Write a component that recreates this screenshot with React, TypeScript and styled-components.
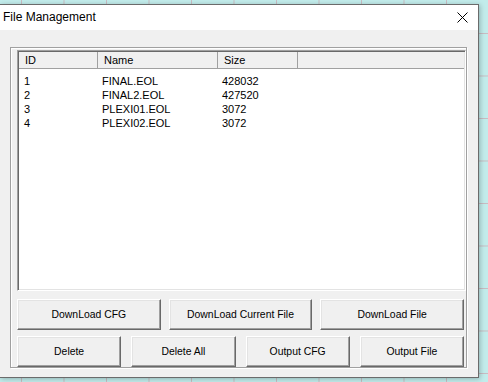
import styled, { createGlobalStyle } from "styled-components";

const GlobalStyle = createGlobalStyle`
  html, body {
    margin: 0;
    padding: 0;
    height: 382px;
    overflow: hidden;
  }
  body {
    background-color: #c2eceb;
    background-image: linear-gradient(to right, #c8bcc2 1px, transparent 1px),
      linear-gradient(to bottom, #c8bcc2 1px, transparent 1px);
    background-size: 42.5px 42.5px;
    background-position: 21px 33px;
    font-family: "Liberation Sans", Arial, sans-serif;
  }
`;

const Desktop = styled.div`
  height: 382px;
  padding-top: 4px;
  box-sizing: border-box;
`;

const Window = styled.div`
  width: 479px;
  height: 374px;
  box-sizing: border-box;
  border: 1px solid #6b6b6b;
  border-left: none;
  display: flex;
  flex-direction: column;
  box-shadow: 1px 1px 5px rgba(0, 0, 0, 0.25);
`;

const TitleBar = styled.div`
  height: 25px;
  flex: none;
  background: #ffffff;
  display: flex;
  align-items: center;
  justify-content: space-between;
  padding: 0 10px 0 3px;
`;

const Title = styled.span`
  font-size: 12px;
  color: #000;
  position: relative;
  top: -1px;
`;

const Body = styled.div`
  flex: 1;
  background: #f0f0f0;
  padding: 17px 0 0 10px;
`;

const Group = styled.div`
  width: 457px;
  height: 321px;
  box-sizing: border-box;
  border: 1px solid #a0a0a0;
  box-shadow: inset 1px 1px #ffffff, 1px 1px #ffffff;
  padding: 2px 0 0 6px;
  display: flex;
  flex-direction: column;
`;

const ListBox = styled.div`
  width: 449px;
  height: 241px;
  flex: none;
  box-sizing: border-box;
  background: #ffffff;
  border-style: solid;
  border-width: 1px;
  border-color: #a0a0a0 #ffffff #ffffff #a0a0a0;
  box-shadow: inset 1px 1px #696969, inset -1px -1px #e3e3e3;
  padding: 1px;
  font-size: 11px;
  color: #000;
`;

const Header = styled.div`
  height: 17px;
  display: flex;
  background: #f0f0f0;
  border-bottom: 1px solid #a0a0a0;
  box-sizing: border-box;
`;

const HeadCell = styled.div<{ w?: number }>`
  width: ${(p) => (p.w ? `${p.w}px` : "auto")};
  flex: ${(p) => (p.w ? "none" : "1")};
  box-sizing: border-box;
  border-right: ${(p) => (p.w ? "1px solid #a0a0a0" : "none")};
  padding-left: 6px;
  line-height: 16px;
  white-space: nowrap;
`;

const Rows = styled.div`
  padding-top: 5px;
`;

const Row = styled.div`
  display: flex;
  height: 14px;
  line-height: 14px;
`;

const Cell = styled.div<{ w: number; pad?: number }>`
  width: ${(p) => p.w}px;
  flex: none;
  padding-left: ${(p) => p.pad ?? 4}px;
  box-sizing: border-box;
  white-space: nowrap;
`;

const ButtonRow = styled.div<{ gap: number; top: number }>`
  width: 447px;
  margin-top: ${(p) => p.top}px;
  display: flex;
  gap: ${(p) => p.gap}px;
`;

const Button = styled.button`
  flex: 1;
  height: 31px;
  padding: 0 0 1px;
  box-sizing: border-box;
  background: #f0f0f0;
  border-style: solid;
  border-width: 1px;
  border-color: #ffffff #696969 #696969 #ffffff;
  box-shadow: inset -1px -1px #a0a0a0, inset 1px 1px #e3e3e3;
  font-family: "Liberation Sans", Arial, sans-serif;
  font-size: 10.4px;
  font-weight: 400;
  color: #000;
`;

const files = [
  { id: 1, name: "FINAL.EOL", size: 428032 },
  { id: 2, name: "FINAL2.EOL", size: 427520 },
  { id: 3, name: "PLEXI01.EOL", size: 3072 },
  { id: 4, name: "PLEXI02.EOL", size: 3072 },
];

function CloseIcon() {
  return (
    <svg width="11" height="11" viewBox="0 0 11 11">
      <path d="M0.5 0.5 L10.5 10.5 M10.5 0.5 L0.5 10.5" stroke="#000" strokeWidth="1" />
    </svg>
  );
}

export default function App() {
  return (
    <Desktop>
      <GlobalStyle />
      <Window>
        <TitleBar>
          <Title>File Management</Title>
          <CloseIcon />
        </TitleBar>
        <Body>
          <Group>
            <ListBox>
              <Header>
                <HeadCell w={79}>ID</HeadCell>
                <HeadCell w={120}>Name</HeadCell>
                <HeadCell w={80}>Size</HeadCell>
                <HeadCell />
              </Header>
              <Rows>
                {files.map((f) => (
                  <Row key={f.id}>
                    <Cell w={79} pad={5}>{f.id}</Cell>
                    <Cell w={120}>{f.name}</Cell>
                    <Cell w={80}>{f.size}</Cell>
                  </Row>
                ))}
              </Rows>
            </ListBox>
            <ButtonRow gap={8} top={8}>
              <Button>DownLoad CFG</Button>
              <Button>DownLoad Current File</Button>
              <Button>DownLoad File</Button>
            </ButtonRow>
            <ButtonRow gap={10} top={6}>
              <Button>Delete</Button>
              <Button>Delete All</Button>
              <Button>Output CFG</Button>
              <Button>Output File</Button>
            </ButtonRow>
          </Group>
        </Body>
      </Window>
    </Desktop>
  );
}
